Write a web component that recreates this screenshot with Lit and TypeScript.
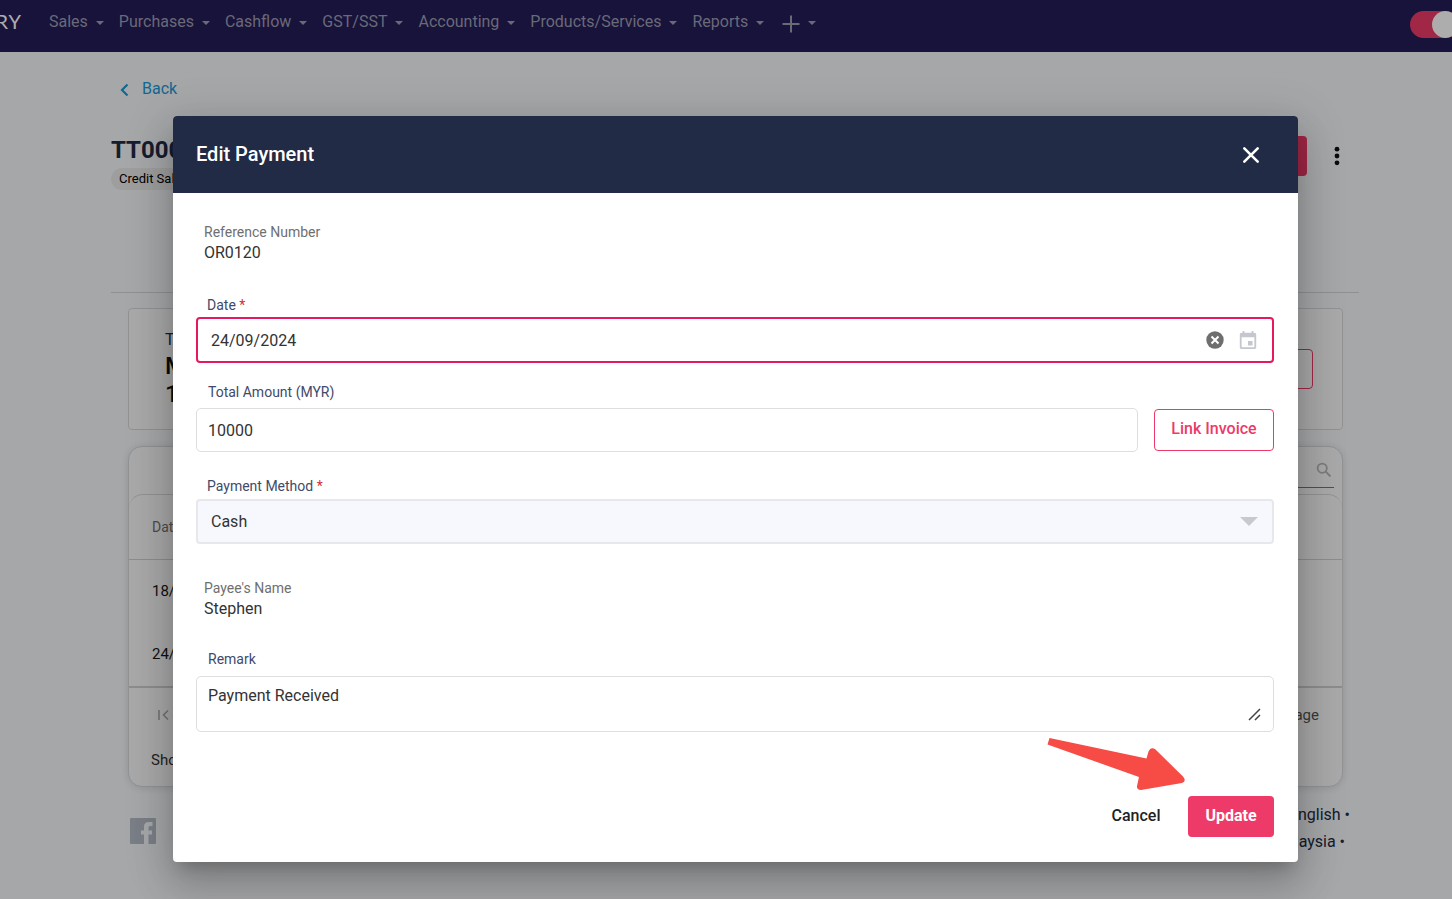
import { LitElement, html, css } from "lit";
import { customElement } from "lit/decorators.js";

const NAV = ["Sales", "Purchases", "Cashflow", "GST/SST", "Accounting", "Products/Services", "Reports"];

const caret = html`<svg class="caret" width="8" height="4" viewBox="0 0 8 4" aria-hidden="true"><path d="M0 0h8L4 4z" fill="currentColor" /></svg>`;

@customElement("payments-page")
class PaymentsPage extends LitElement {
  static styles = css`
    :host { display: block; }
    * { box-sizing: border-box; }
    a { color: inherit; text-decoration: none; }
    button { font: inherit; cursor: pointer; }
    .nav { display: flex; height: 52px; background: #221c57; color: #9d9bb0; overflow: hidden; }
    .logo { flex: none; width: 22px; display: flex; justify-content: flex-end; font: 20px/42px Lato, sans-serif; letter-spacing: 1px; color: #fff; overflow: hidden; }
    .menu { display: flex; gap: 15px; height: 44px; margin-left: 27px; align-items: center; }
    .item { display: flex; align-items: center; gap: 8px; line-height: 20px; white-space: nowrap; }
    .caret { margin-top: 2px; }
    .plus { margin: 3px 0 0 3px; }
    .switch { appearance: none; flex: none; width: 49px; height: 27px; border-radius: 14px; background: #ed3a68; margin: 11px -7px 0 auto; padding: 0; display: flex; justify-content: flex-end; }
    .switch::before { content: ""; width: 27px; height: 27px; border-radius: 50%; background: #fff; }
    .content { padding: 27px 93px 0 111px; }
    .back { display: inline-flex; align-items: center; gap: 13px; padding-left: 9px; line-height: 20px; color: #1b98d5; }
    .back svg { margin-top: 2px; }
    .head { display: flex; justify-content: space-between; align-items: flex-start; height: 157px; margin-top: 34px; border-bottom: 1px solid #d2d4d8; }
    h1 { margin: 0; font-size: 24px; line-height: 28px; font-weight: 700; color: #212b45; }
    .pill { display: inline-block; margin-top: 4px; padding: 0 8px; font-size: 13px; line-height: 22px; border-radius: 11px; background: #e9e9e9; color: #000; }
    .acts { display: flex; align-items: center; gap: 19px; padding-right: 11px; }
    .primary { width: 90px; height: 40px; border: 0; border-radius: 4px; background: #ed3a68; }
    .dots { width: 22px; height: 40px; padding: 0; border: 0; background: none; color: #111; display: grid; place-items: center; }
    .summary, .table-card { margin: 15px 16px 0 17px; border: 1px solid #d6d8db; background: #fafafa; }
    .summary { height: 122px; border-radius: 4px; display: flex; justify-content: space-between; align-items: center; padding: 0 29px 0 36px; }
    .total { line-height: 20px; color: #212b45; }
    .total strong { display: block; width: 60px; font-size: 24px; line-height: 28px; font-weight: 500; color: #111; margin-top: 2px; }
    .outline { width: 100px; height: 40px; border: 1px solid #ed3a68; border-radius: 4px; background: none; }
    .table-card { margin-top: 16px; height: 341px; border-radius: 14px; box-shadow: 0 1px 8px rgba(0, 0, 0, 0.12); font-size: 14px; color: #333; }
    .search { display: flex; justify-content: flex-end; height: 47px; padding: 6px 8px 0 0; }
    .search label { display: flex; align-items: center; height: 35px; border-bottom: 1px solid #777; color: #b5b7ba; padding-right: 2px; }
    .search input { width: 160px; border: 0; background: none; outline: 0; }
    table { width: 100%; border-collapse: separate; border-spacing: 0; border-top: 1px solid #d6d8db; border-radius: 14px 14px 0 0; border-bottom: 2px solid #d0d0d0; }
    th, td { text-align: left; padding: 0 23px; }
    th { height: 65px; font-weight: 400; color: #727272; border-bottom: 1px solid #d0d0d0; }
    td { height: 63px; padding-bottom: 2px; font-size: 15px; color: #171717; }
    .pager { display: flex; justify-content: space-between; align-items: center; height: 56px; padding: 0 23px 2px 28px; font-size: 15px; color: #555; }
    .first { border: 0; background: none; padding: 0; color: #aaa; display: flex; }
    .showing { padding-left: 22px; line-height: 32px; font-size: 15px; }
    .foot { display: flex; justify-content: space-between; margin: 14px 9px 0 18px; color: #212b45; }
    .fb { margin: 16px 0 0; }
    .langs { display: flex; flex-direction: column; align-items: flex-end; line-height: 27px; }
    .langs a:last-child { padding-right: 5px; }
  `;
  render() {
    return html`
      <nav class="nav">
        <span class="logo">RY</span>
        <div class="menu">
          ${NAV.map((n) => html`<a class="item" href="#">${n}${caret}</a>`)}
          <a class="item" href="#" aria-label="Create">
            <svg class="plus" width="18" height="18" viewBox="0 0 18 18"><path d="M9 .5v17M.5 9h17" stroke="currentColor" stroke-width="2" /></svg>${caret}
          </a>
        </div>
        <input class="switch" type="checkbox" role="switch" checked aria-label="Mode" />
      </nav>
      <main class="content">
        <a class="back" href="#"><svg width="9" height="14" viewBox="0 0 9 14" fill="none"><path d="M7.5 1.5L2 7l5.5 5.5" stroke="currentColor" stroke-width="2.2" /></svg>Back</a>
        <header class="head">
          <div><h1>TT000</h1><span class="pill">Credit Sale</span></div>
          <div class="acts">
            <button class="primary" aria-label="Pay"></button>
            <button class="dots" aria-label="More"><svg width="6" height="20" viewBox="0 0 6 20" fill="currentColor"><circle cx="3" cy="3.2" r="2.4" /><circle cx="3" cy="10" r="2.4" /><circle cx="3" cy="16.8" r="2.4" /></svg></button>
          </div>
        </header>
        <section class="summary">
          <div class="total">Total<strong>MYR 10000</strong></div>
          <button class="outline" aria-label="Details"></button>
        </section>
        <section class="table-card">
          <div class="search">
            <label><input aria-label="Search" /><svg width="16" height="16" viewBox="0 0 16 16" fill="none" stroke="currentColor" stroke-width="1.8"><circle cx="6.2" cy="6.2" r="4.6" /><path d="M9.7 9.7l4.8 4.8" /></svg></label>
          </div>
          <table>
            <thead><tr><th>Date</th></tr></thead>
            <tbody><tr><td>18/09</td></tr><tr><td>24/09</td></tr></tbody>
          </table>
          <div class="pager">
            <button class="first" aria-label="First page"><svg width="14" height="12" viewBox="0 0 14 12" fill="none" stroke="currentColor" stroke-width="1.6"><path d="M2 1v10M11 1.5L6.5 6l4.500 4.500" /></svg></button>
            <span>page</span>
          </div>
          <div class="showing">Show</div>
        </section>
        <footer class="foot">
          <svg class="fb" width="28" height="28" viewBox="0 0 28 28"><path fill="#b4bac6" d="M2 1h24a1 1 0 0 1 1 1v24a1 1 0 0 1-1 1h-6.500v-9.500h3.500v-4h-3.500v-3q0-1.500 1.500-1.500h2.500V5h-3.500q-5 0-5 5v3.500h-3v4h3V27H2a1 1 0 0 1-1-1V2a1 1 0 0 1 1-1z" /></svg>
          <div class="langs"><a href="#">English •</a><a href="#">Malaysia •</a></div>
        </footer>
      </main>
    `;
  }
}

@customElement("edit-payment-dialog")
class EditPaymentDialog extends LitElement {
  static styles = css`
    :host { display: block; position: relative; border-radius: 4px; background: #fff; color: #333;
      box-shadow: 0 11px 15px -7px rgba(0, 0, 0, 0.2), 0 24px 38px 3px rgba(0, 0, 0, 0.14), 0 9px 46px 8px rgba(0, 0, 0, 0.12); }
    * { box-sizing: border-box; }
    button, input, select, textarea { font: inherit; color: inherit; margin: 0; }
    button { cursor: pointer; }
    .top { display: flex; justify-content: space-between; align-items: center; height: 77px; padding: 0 36px 0 23px; border-radius: 4px 4px 0 0; background: #212b45; color: #fff; }
    h2 { margin: 0; padding-bottom: 2px; font-size: 20px; line-height: 28px; font-weight: 500; }
    .close { display: grid; place-items: center; width: 22px; height: 22px; padding: 0; border: 0; background: none; }
    form { display: flex; flex-direction: column; padding: 29px 24px 25px 23px; }
    .info { margin: 0 8px; line-height: 20px; }
    .info dt { font-size: 14px; color: #6f6f6f; }
    .info dd { margin: 0; line-height: 22px; }
    .label { font-size: 14px; line-height: 20px; color: #3f4a6b; padding-left: 12px; }
    .date-label, .method-label { padding-left: 11px; }
    .req { color: #d32f2f; }
    .date-label { margin: 31px 0 2px; }
    .amount-label { margin: 19px 0 6px; }
    .method-label { margin: 24px 0 3px; }
    .payee { margin-top: 34px; }
    .remark-label { margin: 29px 0 7px; }
    .date { display: flex; align-items: center; height: 46px; padding: 0 14px 0 13px; border: 2px solid #e5195f; border-radius: 4px; }
    .date input { flex: 1; min-width: 0; border: 0; padding: 2px 0 0; outline: 0; background: none; }
    .icon { display: flex; padding: 0; border: 0; background: none; }
    .cal { margin-left: 14px; }
    .amount { display: flex; gap: 16px; align-items: center; }
    .amount input { flex: 1; min-width: 0; height: 44px; padding: 0 11px; border: 1px solid #dedede; border-radius: 5px; }
    .link { width: 120px; height: 42px; padding: 0 0 3px; border: 1px solid #ed3a68; border-radius: 4px; background: #fff; color: #ed3a68; font-weight: 500; }
    .method, .remark { display: grid; }
    .method > *, .remark > * { grid-area: 1 / 1; }
    .method select { appearance: none; width: 100%; height: 45px; padding: 0 13px; border: 2px solid #e6e8eb; border-radius: 4px; background: #f7f8fd; }
    .arrow { place-self: center end; margin: 0 16px 1px 0; pointer-events: none; }
    .remark textarea { display: block; width: 100%; height: 56px; resize: none; padding: 9px 11px; line-height: 20px; border: 1px solid #dedede; border-radius: 5px; }
    .grip { place-self: end; margin: 0 13px 11px 0; pointer-events: none; }
    .actions { display: flex; justify-content: flex-end; align-items: center; gap: 12px; margin-top: 64px; }
    .cancel, .update { height: 41px; padding: 0 0 2px; border: 0; border-radius: 4px; font-weight: 500; }
    .cancel { width: 80px; background: none; color: #222; }
    .update { width: 86px; background: #ed3a68; color: #fff; font-weight: 700; }
    .pointer { position: absolute; right: 113px; bottom: 70px; pointer-events: none; }
  `;
  render() {
    return html`
      <header class="top">
        <h2>Edit Payment</h2>
        <button class="close" aria-label="Close"><svg width="18" height="18" viewBox="0 0 18 18"><path d="M2.300 2.300l13.400 13.400M15.700 2.300L2.300 15.700" stroke="#fff" stroke-width="2.600" stroke-linecap="round" /></svg></button>
      </header>
      <form @submit=${(e: Event) => e.preventDefault()}>
        <dl class="info"><dt>Reference Number</dt><dd>OR0120</dd></dl>

        <label class="label date-label" for="date">Date <span class="req">*</span></label>
        <div class="date">
          <input id="date" type="text" .value=${"24/09/2024"} />
          <button class="icon" type="button" aria-label="Clear"><svg width="18" height="18" viewBox="0 0 18 18"><circle cx="9" cy="9" r="8.700" fill="#6e6e6e" /><path d="M5.500 5.500l7 7M12.500 5.500l-7 7" stroke="#fff" stroke-width="2" /></svg></button>
          <button class="icon cal" type="button" aria-label="Open calendar"><svg width="20" height="20" viewBox="1 0 22 22"><path fill="#c4c8ce" d="M17 12h-5v5h5v-5zM16 1v2H8V1H6v2H5c-1.110 0-1.990.9-1.990 2L3 19c0 1.100.890 2 2 2h14c1.100 0 2-.9 2-2V5c0-1.100-.9-2-2-2h-1V1h-2zm3 18H5V8h14v11z" /></svg></button>
        </div>

        <label class="label amount-label" for="amount">Total Amount (MYR)</label>
        <div class="amount">
          <input id="amount" type="text" .value=${"10000"} />
          <button class="link" type="button">Link Invoice</button>
        </div>

        <label class="label method-label" for="method">Payment Method <span class="req">*</span></label>
        <div class="method">
          <select id="method"><option>Cash</option></select>
          <svg class="arrow" width="18" height="9" viewBox="0 0 18 9"><path d="M0 0h18L9 9z" fill="#c6cad0" /></svg>
        </div>

        <dl class="info payee"><dt>Payee's Name</dt><dd>Stephen</dd></dl>

        <label class="label remark-label" for="remark">Remark</label>
        <div class="remark">
          <textarea id="remark" .value=${"Payment Received"}></textarea>
          <svg class="grip" width="13" height="13" viewBox="0 0 13 13"><path d="M1 12L12 1M7 12l5-5" stroke="#444" stroke-width="1.500" /></svg>
        </div>

        <div class="actions">
          <button class="cancel" type="button">Cancel</button>
          <button class="update" type="submit">Update</button>
        </div>
      </form>
      <svg class="pointer" width="139" height="54" viewBox="0 0 139 54" aria-hidden="true">
        <path d="M3.500 0L100.500 20.500l2-7q2.500-5.500 7-2L137 38.500q4 4.500-1 6.500L95 52q-4.500-.5-4-4l2-9L1.500 6.500z" fill="#f74c46" />
      </svg>
    `;
  }
}

@customElement("app-root")
class AppRoot extends LitElement {
  static styles = css`
    :host { display: block; position: relative; height: 100vh; overflow: hidden; background: #f5f7fa; font: 16px/20px Roboto, sans-serif; }
    .overlay { position: absolute; inset: 0; display: grid; align-items: start; padding: 116px 154px 37px 173px; background: rgba(0, 0, 0, 0.32); }
  `;
  render() {
    return html`
      <payments-page></payments-page>
      <div class="overlay"><edit-payment-dialog role="dialog" aria-modal="true" aria-label="Edit Payment"></edit-payment-dialog></div>
    `;
  }
}
